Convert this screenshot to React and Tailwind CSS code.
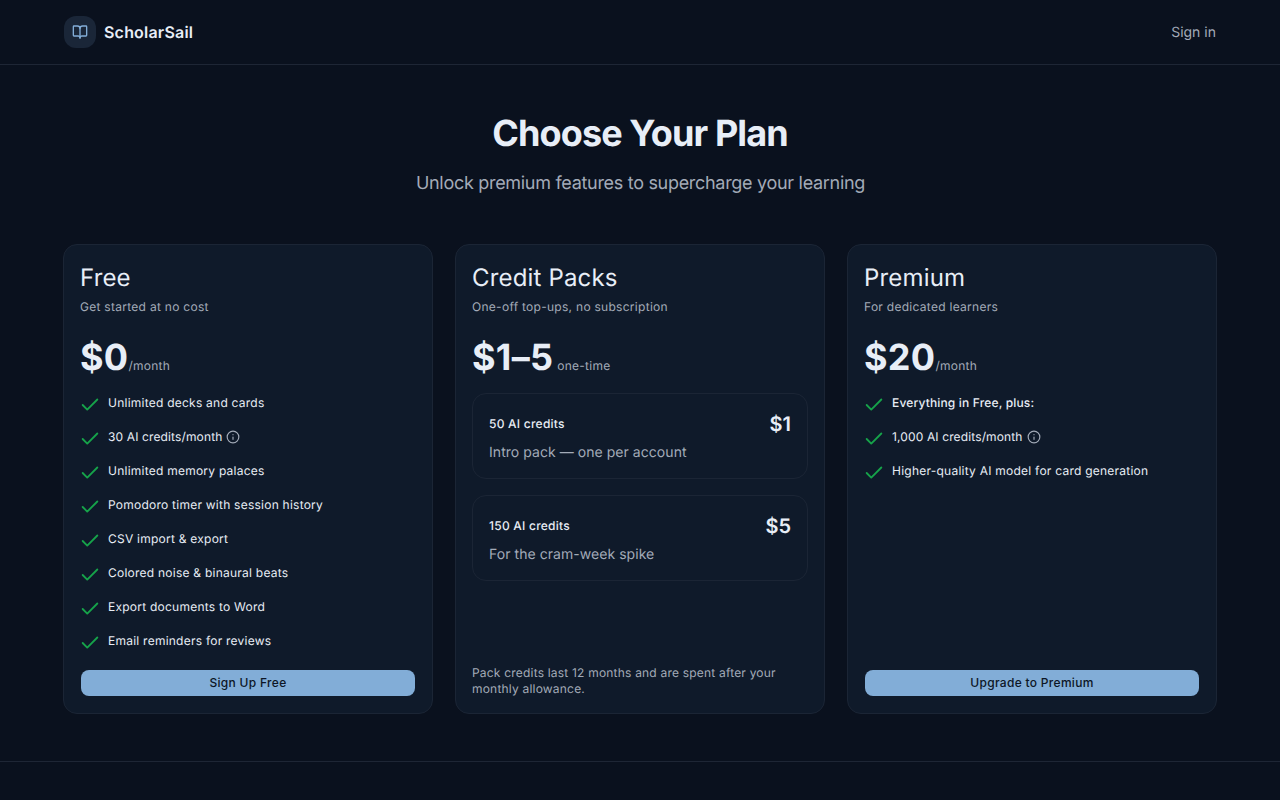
import React from "react";
import { BookOpen, Check, Info } from "lucide-react";

const freeFeatures = [
  { text: "Unlimited decks and cards" },
  { text: "30 AI credits/month", info: true },
  { text: "Unlimited memory palaces" },
  { text: "Pomodoro timer with session history" },
  { text: "CSV import & export" },
  { text: "Colored noise & binaural beats" },
  { text: "Export documents to Word" },
  { text: "Email reminders for reviews" },
];

const premiumFeatures = [
  { text: "Everything in Free, plus:", strong: true },
  { text: "1,000 AI credits/month", info: true },
  { text: "Higher-quality AI model for card generation" },
];

const packs = [
  { credits: "50 AI credits", price: "$1", note: "Intro pack — one per account" },
  { credits: "150 AI credits", price: "$5", note: "For the cram-week spike" },
];

const Feature = ({ text, info, strong }) => (
  <li className="flex h-[18px] items-start gap-2">
    <Check className="-mx-px -mt-px h-[22px] w-[22px] shrink-0 text-[#16a34a]" strokeWidth={2} />
    <span
      className={`text-xs leading-4 text-[#e8edf5] ${strong ? "font-medium tracking-[0.16px]" : ""} ${
        info ? "tracking-[0.13px]" : ""
      } ${!strong && !info ? "tracking-[0.24px]" : ""}`}
    >
      {text}
    </span>
    {info && <Info className="-ml-1 mt-[1px] h-[14px] w-[14px] text-[#a3abb8]" strokeWidth={2} />}
  </li>
);

const CardHead = ({ title, subtitle, price, unit, gap }) => (
  <>
    <h3 className="pt-px text-2xl leading-8 tracking-[0.17px] text-[#e8eef7]">{title}</h3>
    <p className="mt-[5px] text-xs leading-4 tracking-[0.28px] text-[#a3abb8]">{subtitle}</p>
    <div className="mt-5 flex h-[44px] items-end">
      <span className="text-4xl leading-[44px] font-bold tracking-[0.3px] text-[#e8eef7]">{price}</span>
      <span className={`pb-[5px] text-xs leading-4 tracking-[0.24px] text-[#a3abb8] ${gap ? "ml-1" : ""}`}>{unit}</span>
    </div>
  </>
);

const CtaButton = ({ children }) => (
  <button className="mx-px mb-px h-[26px] rounded-lg bg-[#82add7] text-xs font-medium tracking-[0.3px] text-[#0d1626]">
    {children}
  </button>
);

const Card = ({ children }) => (
  <div className="flex h-[470px] flex-col rounded-[14px] border border-[#1b2535] bg-[#0f1a2a] px-4 pt-4 pb-4">
    {children}
  </div>
);

const App = () => {
  return (
    <div className="min-h-[800px] bg-[#0a111e] font-['Inter',sans-serif] [text-rendering:geometricPrecision]">
      <header className="flex h-[65px] items-center justify-between border-b border-[#1e2635] px-16">
        <div className="flex items-center gap-2">
          <div className="flex h-8 w-8 items-center justify-center rounded-xl bg-[#1a2638]">
            <BookOpen className="h-4 w-4 text-[#82add7]" strokeWidth={2} />
          </div>
          <span className="text-base font-semibold tracking-[0.2px] text-[#e8eef7]">ScholarSail</span>
        </div>
        <a className="mt-px text-sm text-[#a3abb8]">Sign in</a>
      </header>

      <div className="pt-[44px] text-center">
        <h1 className="text-4xl leading-[48px] font-bold tracking-[-0.9px] text-[#e8eef7]">Choose Your Plan</h1>
        <p className="mt-[13px] pl-px text-lg leading-7 tracking-[-0.3px] text-[#a3abb8]">
          Unlock premium features to supercharge your learning
        </p>
      </div>

      <div className="mt-[46px] grid grid-cols-3 gap-[22px] px-[63px]">
        <Card>
          <CardHead title="Free" subtitle="Get started at no cost" price="$0" unit="/month" />
          <ul className="mt-4 flex flex-col gap-4">
            {freeFeatures.map((f) => (
              <Feature key={f.text} {...f} />
            ))}
          </ul>
          <div className="mt-auto flex flex-col">
            <CtaButton>Sign Up Free</CtaButton>
          </div>
        </Card>

        <Card>
          <CardHead title="Credit Packs" subtitle="One-off top-ups, no subscription" price="$1–5" unit="one-time" gap />
          <div className="mt-[14px] flex flex-col gap-4">
            {packs.map((p) => (
              <div key={p.credits} className="h-[86px] rounded-[14px] border border-[#1b2535] px-4 pt-4">
                <div className="flex items-center justify-between">
                  <span className="text-xs leading-6 font-medium tracking-[0.24px] text-[#e8edf5]">{p.credits}</span>
                  <span className="text-xl leading-7 font-semibold text-[#e8eef7]">{p.price}</span>
                </div>
                <p className="mt-[5px] text-sm leading-5 tracking-[0.05px] text-[#a3abb8]">{p.note}</p>
              </div>
            ))}
          </div>
          <p className="mt-auto text-xs leading-4 tracking-[0.2px] text-[#a3abb8]">
            Pack credits last 12 months and are spent after your monthly allowance.
          </p>
        </Card>

        <Card>
          <CardHead title="Premium" subtitle="For dedicated learners" price="$20" unit="/month" />
          <ul className="mt-4 flex flex-col gap-4">
            {premiumFeatures.map((f) => (
              <Feature key={f.text} {...f} />
            ))}
          </ul>
          <div className="mt-auto flex flex-col">
            <CtaButton>Upgrade to Premium</CtaButton>
          </div>
        </Card>
      </div>

      <footer className="mt-[47px] h-[39px] border-t border-[#1e2635]" />
    </div>
  );
};

export default App;
